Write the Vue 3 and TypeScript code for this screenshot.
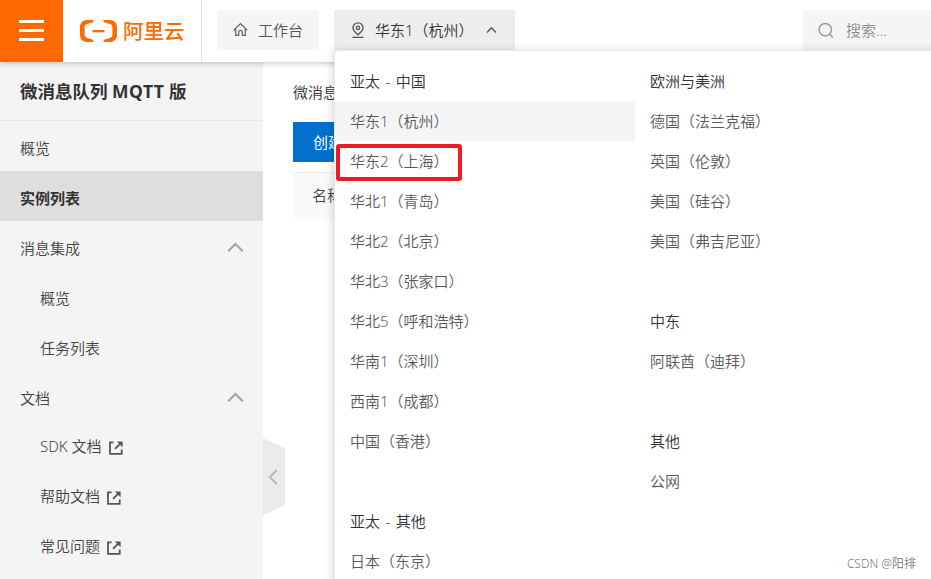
<script setup lang="ts">
interface RegionGroup {
  title: string
  regions: string[]
}

interface NavItem {
  label: string
  active?: boolean
  child?: boolean
  group?: boolean
  external?: boolean
}

const navItems: NavItem[] = [
  { label: '概览' },
  { label: '实例列表', active: true },
  { label: '消息集成', group: true },
  { label: '概览', child: true },
  { label: '任务列表', child: true },
  { label: '文档', group: true },
  { label: 'SDK 文档', child: true, external: true },
  { label: '帮助文档', child: true, external: true },
  { label: '常见问题', child: true, external: true },
]

const current = '华东1（杭州）'
const marked = '华东2（上海）'

const columns: RegionGroup[][] = [
  [
    {
      title: '亚太 - 中国',
      regions: [
        '华东1（杭州）',
        '华东2（上海）',
        '华北1（青岛）',
        '华北2（北京）',
        '华北3（张家口）',
        '华北5（呼和浩特）',
        '华南1（深圳）',
        '西南1（成都）',
        '中国（香港）',
      ],
    },
    { title: '亚太 - 其他', regions: ['日本（东京）'] },
  ],
  [
    {
      title: '欧洲与美洲',
      regions: ['德国（法兰克福）', '英国（伦敦）', '美国（硅谷）', '美国（弗吉尼亚）'],
    },
    { title: '中东', regions: ['阿联酋（迪拜）'] },
    { title: '其他', regions: ['公网'] },
  ],
]
</script>

<template>
  <div class="page">
    <header class="topbar">
      <button class="menu-btn" aria-label="menu"><i /><i /><i /></button>
      <div class="brand">
        <svg class="brand-mark" width="37" height="22" viewBox="0 0 37 22">
          <path
            fill="#ff6a00"
            d="M14 0H7C3 0 0 3 0 7v8c0 4 3 7 7 7h7l-1.600-2.500-5.400-1.600C5.400 17.300 4.600 16.200 4.600 14.500v-7C4.600 5.800 5.400 4.700 7 4.100L12.400 2.500zM23 0h7c4 0 7 3 7 7v8c0 4-3 7-7 7h-7l1.600-2.500 5.400-1.600c1.600-.6 2.400-1.700 2.400-3.400v-7c0-1.700-.8-2.800-2.400-3.400L24.600 2.500zM12.500 10h12v2.300h-12z"
          />
        </svg>
        <span class="brand-name">阿里云</span>
      </div>
      <div class="chip workbench">
        <svg width="15" height="15" viewBox="0 0 15 15" fill="none" stroke="#666" stroke-width="1.300">
          <path d="M.8 8.200 7.500 1.600l6.700 6.600M2.700 7v6.300h3v-3.100a1.800 1.800 0 0 1 3.600 0v3.100h3V7" />
        </svg>
        <span>工作台</span>
      </div>
      <div class="chip region">
        <svg width="14" height="17" viewBox="0 0 14 17" fill="none" stroke="#555" stroke-width="1.300">
          <path d="M7 12.800C4 10.300 2 8.300 2 5.800a5 5 0 0 1 10 0c0 2.500-2 4.500-5 7zM1.500 15.400h11" />
          <circle cx="7" cy="5.800" r="1.700" />
        </svg>
        <span>{{ current }}</span>
        <svg class="caret" width="11" height="8" viewBox="0 0 11 8" fill="none" stroke="#555" stroke-width="1.400">
          <path d="M1 6.500 5.500 1.700 10 6.500" />
        </svg>
      </div>
      <div class="search">
        <svg width="16" height="17" viewBox="0 0 16 17" fill="none" stroke="#999" stroke-width="1.500">
          <circle cx="7.300" cy="7.700" r="6.200" />
          <path d="m11.800 12.200 3 3.300" />
        </svg>
        <span>搜索...</span>
      </div>
    </header>

    <div class="body">
      <aside class="sidebar">
        <h1>微消息队列 <span class="latin">MQTT</span> 版</h1>
        <nav>
          <a
            v-for="(item, i) in navItems"
            :key="i"
            :class="{ active: item.active, child: item.child, external: item.external }"
          >
            <span>{{ item.label }}</span>
            <svg v-if="item.group" class="fold" width="17" height="11" viewBox="0 0 17 11" fill="none" stroke="#a3a3a3" stroke-width="2">
              <path d="M1.200 9.300 8.500 2l7.300 7.300" />
            </svg>
            <svg v-if="item.external" class="out" width="14" height="14" viewBox="0 0 14 14" fill="none" stroke="#555" stroke-width="1.800">
              <path d="M4.500 1.400H1v11.500h11.700V8.500M6 7.800l5-5" />
              <path d="M7.800.5h5.800v5.800z" fill="#555" stroke="none" />
            </svg>
          </a>
        </nav>
      </aside>
      <div class="fold-rail">
        <div class="handle">
          <svg width="10" height="16" viewBox="0 0 10 16" fill="none" stroke="#b8b8b8" stroke-width="2">
            <path d="M8.800 1 1.800 8l7 7" />
          </svg>
        </div>
      </div>
      <main class="content">
        <div class="crumb">微消息</div>
        <button class="create">创建</button>
        <div class="table-head">名称</div>
      </main>
    </div>

    <div class="dropdown">
      <div v-for="(col, c) in columns" :key="c" class="column">
        <section v-for="g in col" :key="g.title">
          <h2>{{ g.title }}</h2>
          <div v-for="r in g.regions" :key="r" class="option" :class="{ selected: r === current }">
            {{ r }}
            <i v-if="r === marked" class="mark" />
          </div>
        </section>
      </div>
    </div>
    <div class="credit">CSDN @阳排</div>
  </div>
</template>

<style>
body {
  overflow: hidden;
}
</style>

<style scoped>
* {
  box-sizing: border-box;
}
.page {
  position: relative;
  height: 579px;
  overflow: hidden;
  display: flex;
  flex-direction: column;
  background: #fff;
  color: #333;
  font: 350 15px/20px 'Noto Sans', 'Noto Sans CJK SC', sans-serif;
}
svg {
  flex: none;
  display: block;
}
span {
  white-space: nowrap;
}
.topbar {
  position: relative;
  flex: none;
  height: 62px;
  display: flex;
  align-items: flex-start;
  background: #fff;
  box-shadow: 0 1px 6px rgba(0, 0, 0, 0.25);
}
.menu-btn {
  width: 63px;
  height: 62px;
  padding: 0 19px 2px;
  border: 0;
  background: #ff6a00;
  display: flex;
  flex-direction: column;
  justify-content: center;
  gap: 6px;
}
.menu-btn i {
  height: 3px;
  background: #fff;
}
.brand {
  width: 139px;
  height: 62px;
  padding-left: 17px;
  display: flex;
  align-items: center;
  gap: 6px;
  border-right: 1px solid #e5e5e5;
}
.brand-name {
  color: #ff6a00;
  font-size: 20.500px;
  font-weight: 500;
}
.chip {
  height: 40px;
  margin-top: 10px;
  display: flex;
  align-items: center;
  border-radius: 2px;
}
.workbench {
  width: 102px;
  margin-left: 15px;
  padding: 0 0 1px 16px;
  gap: 10px;
  background: #f4f5f7;
  color: #555;
}
.region {
  width: 181px;
  margin-left: 15px;
  padding-left: 17px;
  gap: 10px;
  background: #ededed;
  color: #333;
}
.caret {
  margin-left: 2px;
}
.search {
  width: 128px;
  height: 40px;
  margin: 10px 0 0 auto;
  padding-left: 15px;
  display: flex;
  align-items: center;
  gap: 12px;
  background: #f4f5f7;
  color: #8c8c8c;
}
.body {
  flex: 1;
  min-height: 0;
  display: flex;
}
.sidebar {
  width: 263px;
  background: #f4f4f4;
}
h1 {
  height: 59px;
  margin: 0;
  padding-left: 20px;
  border-bottom: 1px solid #e8e8e8;
  font-size: 17.500px;
  font-weight: 700;
  line-height: 59px;
}
.latin {
  letter-spacing: 0.5px;
}
nav a {
  height: 50px;
  padding: 3px 19px 0 20px;
  display: flex;
  align-items: center;
  justify-content: space-between;
  color: #444;
}
nav a.active {
  background: #dedede;
  color: #333;
  font-weight: 700;
}
nav a.child {
  padding-left: 40px;
}
nav a.external {
  justify-content: flex-start;
  gap: 7px;
  padding-top: 0;
}
.out {
  margin-top: 4px;
}
.fold-rail {
  width: 30px;
  padding-top: 376px;
}
.handle {
  width: 22px;
  height: 77px;
  padding: 1px 0 0 5px;
  display: flex;
  align-items: center;
  background: #eaeaea;
  clip-path: polygon(0 0, 100% 10px, 100% 67px, 0 100%);
}
.content {
  flex: 1;
  padding-top: 20px;
}
.crumb {
  height: 40px;
}
.create {
  display: block;
  width: 120px;
  height: 40px;
  padding: 0 20px;
  border: 0;
  background: #0070cc;
  color: #fff;
  font: inherit;
  font-weight: 400;
  text-align: left;
}
.table-head {
  height: 47px;
  margin-top: 10px;
  padding-left: 19px;
  border-top: 1px solid #ebebeb;
  background: #fafafa;
  color: #444;
  line-height: 45px;
}
.dropdown {
  position: absolute;
  top: 50px;
  left: 334px;
  width: 640px;
  height: 580px;
  padding-top: 10px;
  display: flex;
  border: 1px solid #e8e8e8;
  background: #fff;
  box-shadow: 0 2px 10px rgba(0, 0, 0, 0.2);
}
.column {
  width: 300px;
}
section {
  margin-bottom: 40px;
}
h2,
.option {
  position: relative;
  height: 40px;
  margin: 0;
  padding-left: 15px;
  font-size: 15px;
  font-weight: 350;
  line-height: 40px;
}
h2 {
  word-spacing: 1.500px;
}
.option {
  color: #595959;
}
.selected {
  background: #f4f5f7;
}
.mark {
  position: absolute;
  top: 3px;
  left: 1px;
  width: 126px;
  height: 37px;
  border: 4px solid #ed1c24;
  border-radius: 3px;
}
.credit {
  position: absolute;
  right: 15px;
  bottom: 5px;
  color: #777;
  font-size: 12px;
}
</style>
